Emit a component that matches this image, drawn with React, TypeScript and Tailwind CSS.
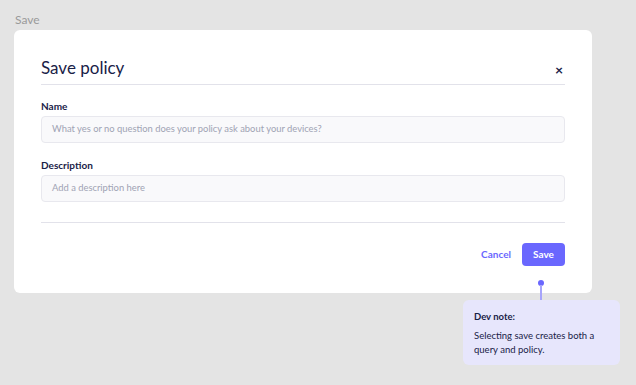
import React from "react";

const App = () => {
  return (
    <div
      className="relative w-[636px] h-[385px] bg-[#e4e4e4] overflow-hidden"
      style={{ fontFamily: "Lato, 'Noto Sans', sans-serif" }}
    >
      <div className="pl-[15px] pt-[13px] text-[12px] leading-[14px] text-[#9a9a9a]">Save</div>
      <div className="ml-[14px] mt-[3px] w-[578px] h-[263px] bg-white rounded-[6px] px-[27px] pt-[25px]">
        <div className="flex items-center justify-between h-[26px]">
          <h1 className="text-[17px] text-[#192147]">Save policy</h1>
          <span className="text-[#192147] text-[14px] font-bold leading-none mr-[2px] mt-[3px]">×</span>
        </div>
        <div className="mt-[3px] h-px bg-[#e2e2ea]" />
        <div className="mt-[15px]">
          <label className="block text-[10px] font-bold text-[#192147] leading-[12px]">Name</label>
          <div className="mt-[4px] h-[27px] rounded-[4px] border border-[#e8e8ee] bg-[#f9f9fb] px-[10px] flex items-center text-[9.4px] text-[#a0a3b4]">
            What yes or no question does your policy ask about your devices?
          </div>
        </div>
        <div className="mt-[16px]">
          <label className="block text-[10px] font-bold text-[#192147] leading-[12px]">Description</label>
          <div className="mt-[4px] h-[27px] rounded-[4px] border border-[#e8e8ee] bg-[#f9f9fb] px-[10px] flex items-center text-[9.4px] text-[#a0a3b4]">
            Add a description here
          </div>
        </div>
        <div className="mt-[20px] h-px bg-[#e2e2ea]" />
        <div className="mt-[20px] flex items-center justify-end gap-[11px]">
          <button className="text-[10px] font-bold text-[#6a67fe]">Cancel</button>
          <button className="w-[43px] h-[23px] rounded-[4px] bg-[#6a67fe] text-white text-[10px] font-bold">Save</button>
        </div>
      </div>

      <div className="absolute left-[538px] top-[280px] w-[6px] h-[6px] rounded-full bg-[#6a67fe]" />
      <div className="absolute left-[540px] top-[285px] w-[2px] h-[15px] bg-[#a6a4fb]" />
      <div className="absolute left-[463px] top-[300px] w-[157px] h-[65px] rounded-[6px] bg-[#e7e6fc] px-[11px] pt-[11px] text-[#192147]">
        <div className="text-[9.5px] font-bold leading-[12px]">Dev note:</div>
        <div className="mt-[6px] text-[9.5px] leading-[14px]">Selecting save creates both a query and policy.</div>
      </div>
    </div>
  );
};

export default App;
